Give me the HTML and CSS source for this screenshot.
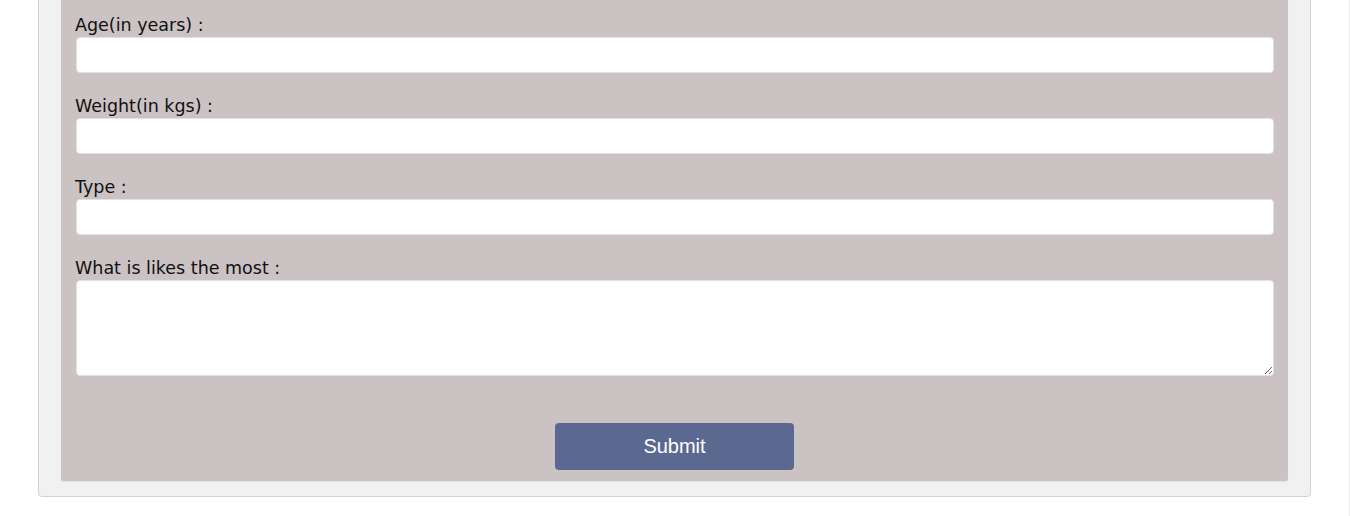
FILE: index.html
```html
<!DOCTYPE html>
<html lang="en">
<head>
<meta charset="utf-8">
<title>Pet form</title>
<link rel="stylesheet" href="styles.css">
</head>
<body>
<div class="page-edge"></div>
<div class="outer">
  <form class="panel">
    <div class="field">
      <label class="label" for="age">Age(in years) :</label>
      <input class="input" id="age" type="text">
    </div>
    <div class="field">
      <label class="label" for="weight">Weight(in kgs) :</label>
      <input class="input" id="weight" type="text">
    </div>
    <div class="field">
      <label class="label" for="type">Type :</label>
      <input class="input" id="type" type="text">
    </div>
    <div class="field field-last">
      <label class="label" for="likes">What is likes the most :</label>
      <textarea class="textarea" id="likes"></textarea>
    </div>
    <div class="actions">
      <button class="submit" type="button">Submit</button>
    </div>
  </form>
</div>
</body>
</html>
```

FILE: styles.css
```css
html {
  background: #ffffff;
}
body {
  margin: 0;
  font-family: "DejaVu Sans", Verdana, sans-serif;
  color: #111;
}
.page-edge {
  position: fixed;
  top: 0;
  right: 0;
  width: 1px;
  height: 100%;
  background: #ececec;
}
.outer {
  width: 1227px;
  margin: -40px 0 0 38px;
  padding: 22px 22px 15px;
  background: #f1f1f1;
  border: 1px solid #d2d2d2;
  border-radius: 4px;
}
.panel {
  background: #cbc2c3;
  border-radius: 3px;
  padding: 32px 14px 11px;
  box-shadow: 0 1px 1px rgba(0, 0, 0, 0.08);
}
.field {
  margin-bottom: 23px;
}
.field-last {
  margin-bottom: 47px;
}
.label {
  display: block;
  font-size: 17.5px;
  line-height: 20px;
  margin-bottom: 2px;
}
.input,
.textarea {
  display: block;
  box-sizing: border-box;
  width: calc(100% - 1px);
  margin-left: 1px;
  height: 36px;
  border: 1px solid #e4e0e0;
  border-radius: 4px;
  background: #fff;
  padding: 4px 8px;
  font: inherit;
  font-size: 16px;
}
.textarea {
  height: 96px;
  resize: vertical;
}
.actions {
  display: flex;
  justify-content: center;
}
.submit {
  width: 239px;
  height: 47px;
  background: #5b6990;
  color: #fff;
  border: none;
  border-radius: 4px;
  font-family: "Liberation Sans", Arial, sans-serif;
  font-size: 20px;
  cursor: pointer;
}
```
